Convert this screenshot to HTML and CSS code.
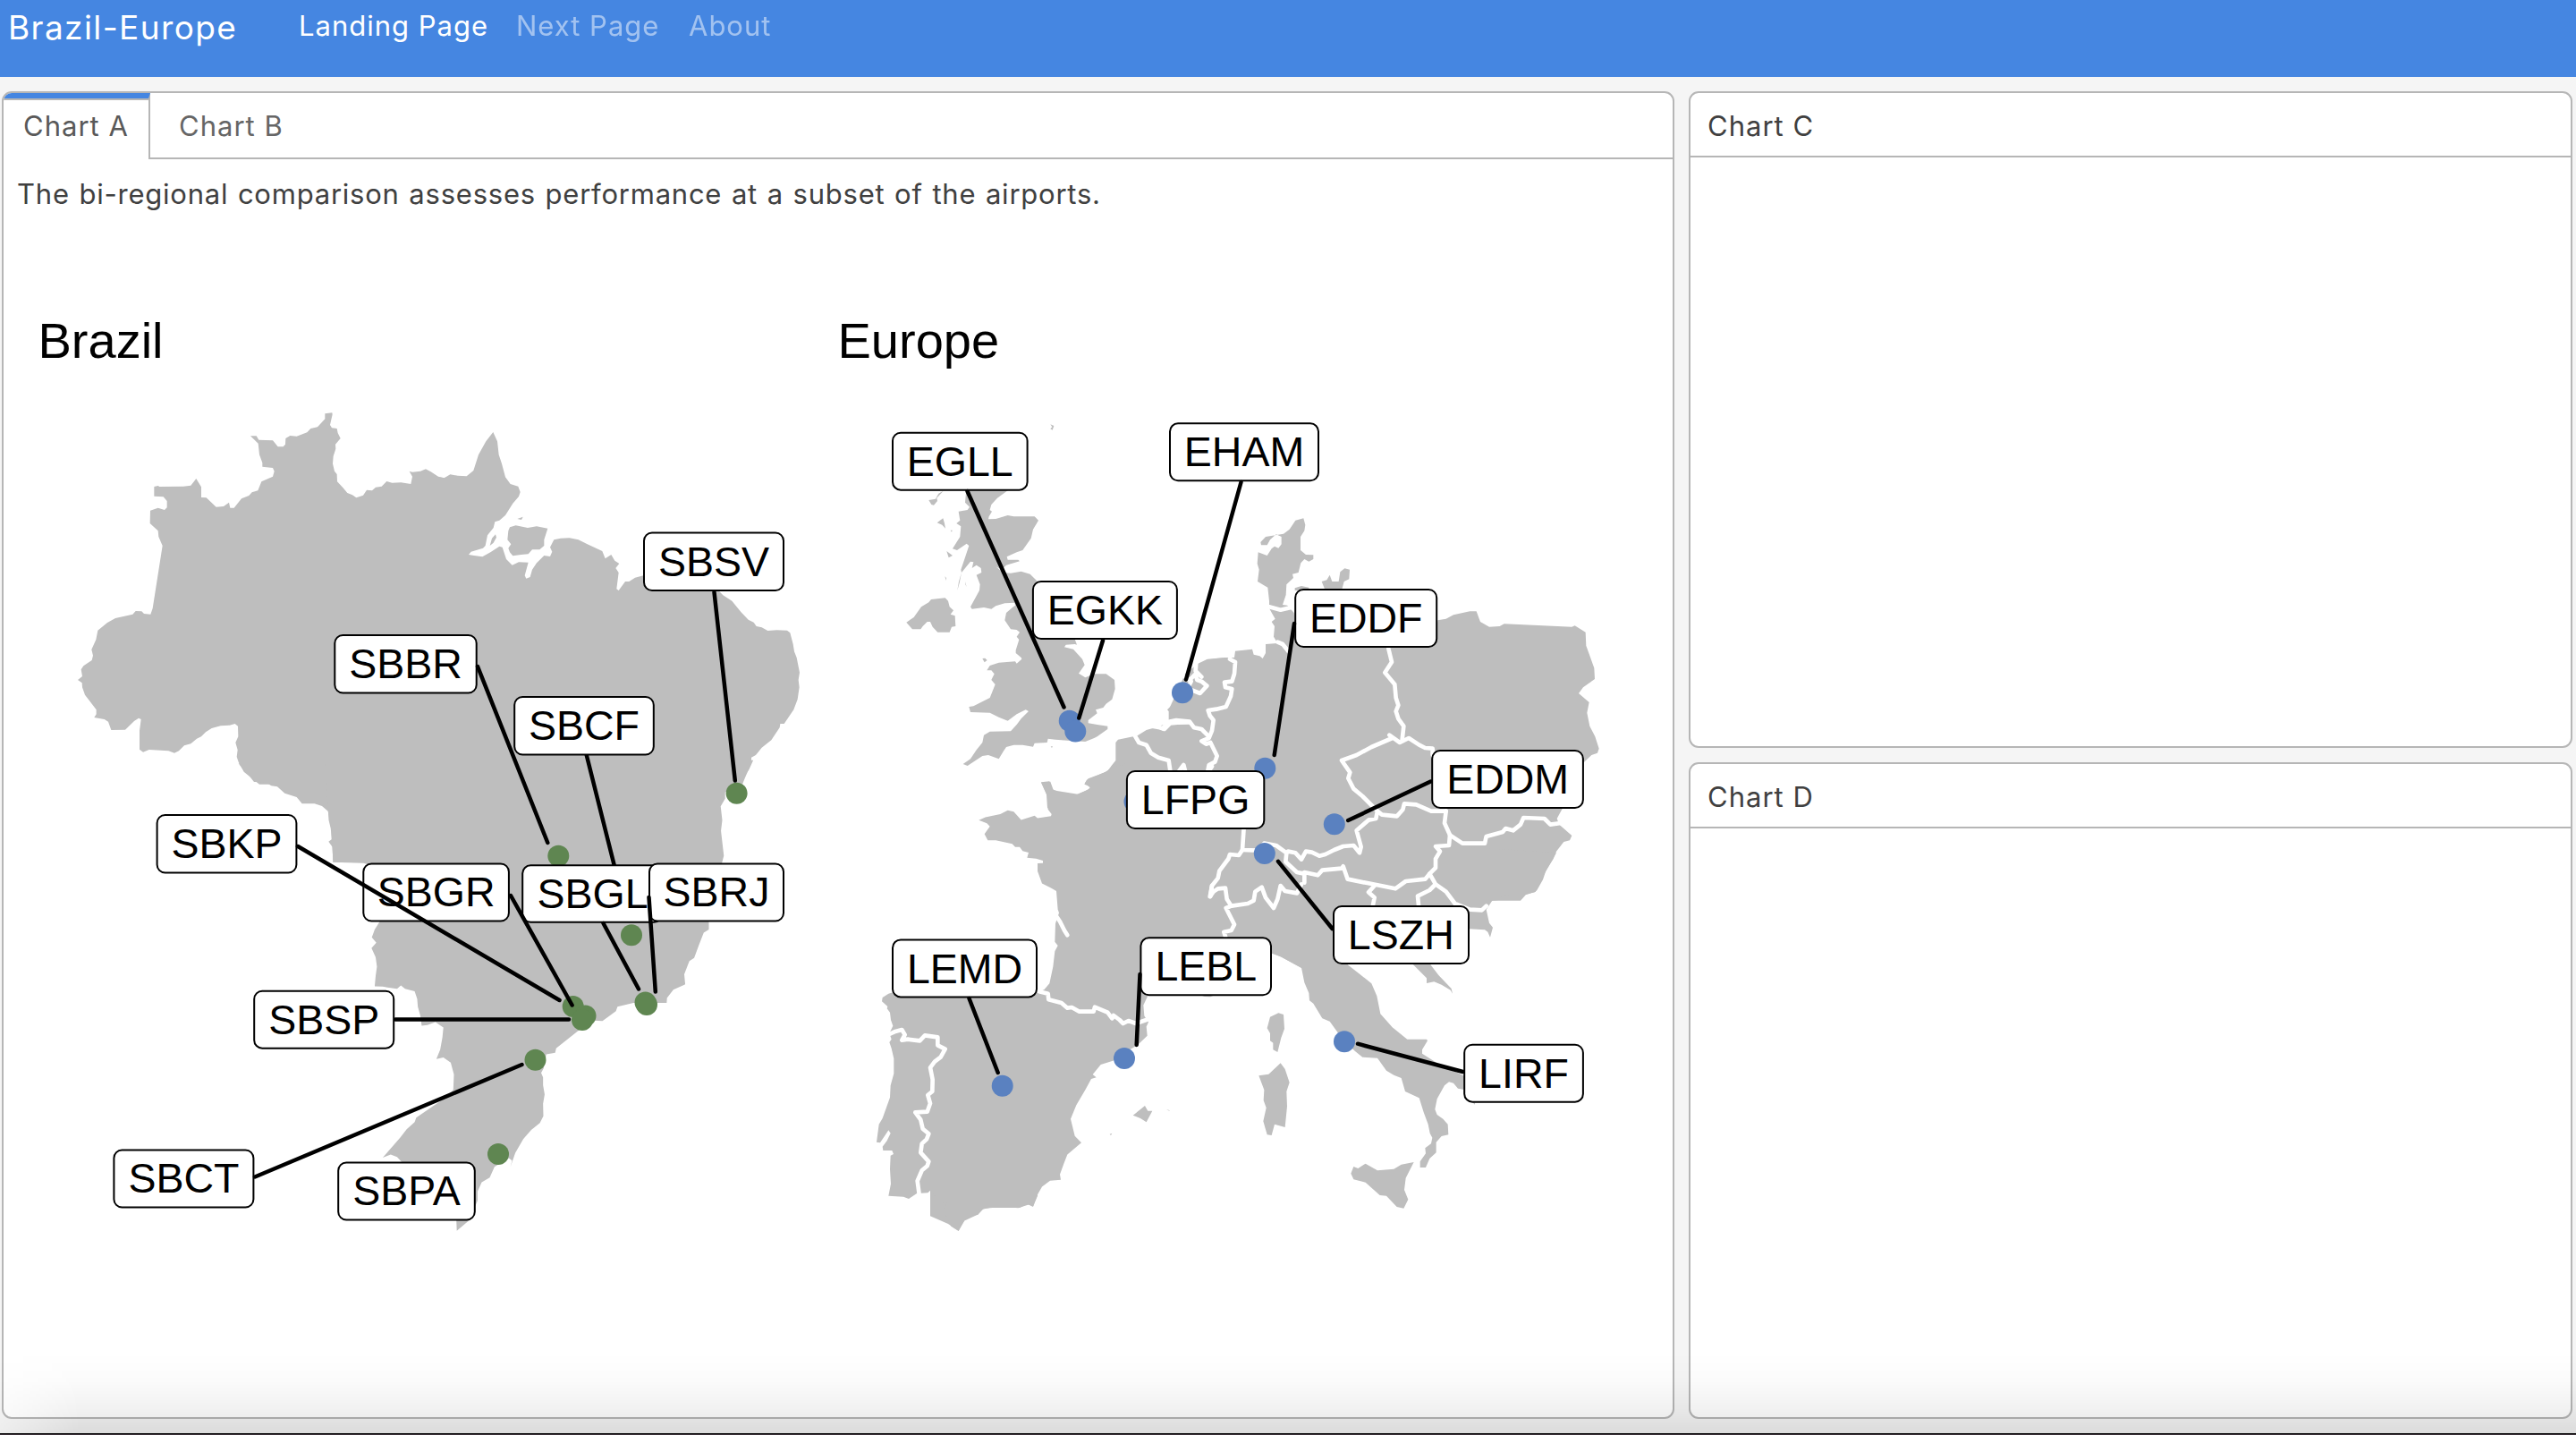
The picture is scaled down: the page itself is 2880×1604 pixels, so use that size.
FILE: index.html
```html
<!DOCTYPE html>
<html lang="en">
<head>
<meta charset="utf-8">
<title>Brazil-Europe</title>
<link rel="stylesheet" href="styles.css">
</head>
<body>
<header class="navbar">
  <a class="brand">Brazil-Europe</a>
  <nav class="nav">
    <a class="nav-link active">Landing Page</a>
    <a class="nav-link next">Next Page</a>
    <a class="nav-link about">About</a>
  </nav>
</header>
<main class="dashboard">
  <section class="card">
    <div class="tabs">
      <a class="tab active">Chart A</a>
      <a class="tab">Chart B</a>
      <span class="tab-fill"></span>
    </div>
    <p class="note">The bi-regional comparison assesses performance at a subset of the airports.</p>
    <svg class="map" viewBox="4 260 1864 1300">
      <text class="title" x="42.5" y="400">Brazil</text>
      <text class="title" x="936.5" y="400">Europe</text>

      <!-- Brazil -->
      <g class="land">
        <g transform="translate(60 430) scale(.33333)">
          <path d="M910,97 934,94 935,100 927,135 933,145 950,147 953,162 962,180 945,200 946,215 938,240 936,265 942,290 950,300 951,325 970,345 985,363 1002,370 1015,379 1038,371 1050,353 1068,355 1080,344 1100,341 1117,324 1135,329 1165,328 1198,333 1203,308 1193,290 1203,293 1230,290 1248,283 1265,292 1290,308 1310,313 1330,305 1330,1340 690,1340 665,1320 638,1298 620,1265 614,1248 617,1225 610,1200 619,1180 618,1145 608,1137 590,1142 560,1144 530,1152 510,1165 495,1180 480,1187 460,1204 438,1210 420,1228 405,1235 385,1228 320,1224 300,1232 288,1223 288,1160 293,1122 285,1118 270,1128 240,1157 193,1158 183,1130 170,1122 136,1116 143,1105 143,1090 120,1060 105,1040 96,1015 95,1000 81,990 96,978 92,955 100,943 128,924 132,908 127,888 142,855 148,824 180,798 207,783 265,770 275,759 295,760 303,768 325,770 332,750 365,540 352,510 350,490 323,465 324,422 350,413 372,420 380,412 380,390 368,376 337,374 337,342 350,339 355,342 435,341 460,338 478,315 495,343 495,378 512,379 545,410 570,408 588,395 592,413 605,413 630,382 655,372 665,361 685,355 697,325 735,308 740,290 735,279 700,275 700,262 690,235 686,197 660,172 680,172 688,185 735,187 752,208 770,208 777,200 778,180 793,171 815,173 850,160 862,147 885,142 910,115Z"/>
        </g>
        <g transform="translate(480 430) scale(.33333)">
          <path d="M-30,300 0,291 30,310 50,313 70,301 95,305 125,307 148,288 165,235 190,190 214,159 228,190 233,235 243,265 255,310 272,333 298,341 305,360 300,375 280,398 255,438 235,455 220,460 215,480 195,505 188,540 180,548 140,560 132,570 150,573 178,577 205,562 235,542 245,545 258,585 278,605 300,595 332,596 320,640 325,650 338,645 345,620 360,598 385,573 405,576 412,560 405,545 418,520 440,515 470,514 500,520 530,535 580,558 590,583 610,570 622,590 637,600 625,615 635,630 628,685 635,690 657,660 670,660 690,647 718,640 960,680 985,706 1015,725 1045,762 1070,788 1088,797 1097,810 1115,814 1135,825 1165,823 1200,824 1210,832 1220,870 1224,895 1232,915 1242,965 1238,990 1241,1015 1235,1055 1222,1090 1190,1137 1177,1137 1175,1150 1147,1192 1115,1217 1095,1242 1080,1250 1080,1270 1058,1320 1050,1340 -30,1340Z"/>
          <path d="M270,478 290,472 330,480 360,475 397,482 385,520 385,540 370,553 345,553 332,568 308,570 280,574 270,562 265,548 274,535 262,520 265,490Z"/>
          <path d="M222,502 210,515 203,540 215,530 225,512ZM295,450 314,443 309,453Z"/>
        </g>
        <path transform="translate(110 860) scale(.33333)" d="M470,-20 485,0 505,20 522,42 560,43 580,55 600,58 625,80 665,93 683,115 725,115 750,123 770,140 775,165 781,200 782,235 772,242 785,260 787,311 1320,315 1320,-20Z"/>
        <path transform="translate(360 860) scale(.35714 .34436)" d="M10,-30 21,165 27,190 31,225 32,250 35,301 130,304 180,320 180,495 165,520 156,545 170,563 155,580 168,610 172,640 168,670 165,704 190,705 205,708 235,712 247,701 260,712 290,720 298,745 300,770 308,800 312,832 330,830 355,820 380,838 377,870 370,910 358,940 380,935 403,952 413,990 411,1040 380,1070 345,1095 295,1130 290,1145 265,1168 245,1195 190,1260 215,1250 235,1258 250,1275 260,1300 420,1450 422,1498 460,1464 487,1400 487,1370 500,1340 525,1325 540,1290 585,1262 595,1270 590,1290 605,1245 630,1200 655,1170 682,1148 693,1125 692,1085 697,1055 692,1025 692,1000 686,985 694,970 702,925 730,920 733,905 800,850 850,815 878,817 920,785 925,770 975,758 1079,758 1080,742 1100,715 1137,698 1134,665 1150,622 1165,612 1180,570 1195,530 1211,520 1211,490 1253,300 1258,280 1249,200 1253,165 1248,120 1262,95 1262,75 1310,40 1337,0 1350,-30Z"/>
      </g>

      <!-- British Isles and the Channel coast -->
      <g class="land" transform="translate(960 460) scale(.33333)">
        <path d="M510,250 500,265 465,290 445,312 440,330 447,335 437,352 435,361 460,360 500,348 520,352 590,352 603,365 585,395 578,425 550,465 530,472 497,487 500,497 535,497 540,502 495,515 480,530 460,520 485,540 510,542 545,536 575,545 600,570 720,750 732,782 725,780 695,782 690,790 720,797 750,830 758,850 738,878 760,892 790,880 830,880 858,900 860,930 850,965 830,980 820,993 795,1000 800,1012 770,1035 770,1045 800,1050 835,1055 835,1065 800,1090 790,1095 760,1107 700,1103 660,1100 635,1097 632,1110 590,1112 585,1124 550,1118 520,1118 495,1125 485,1140 470,1165 435,1152 415,1155 365,1188 350,1182 375,1165 395,1135 415,1110 420,1085 440,1073 510,1072 530,1050 545,1030 570,1005 560,1000 530,1015 500,1037 470,1025 440,1010 375,1008 370,990 385,988 440,960 458,915 445,900 455,880 445,868 430,868 440,852 470,842 525,838 530,845 547,830 545,825 527,810 527,800 538,765 530,755 540,740 530,732 510,730 490,700 495,675 515,658 525,650 523,641 490,643 460,652 445,662 420,657 380,662 375,655 405,600 407,580 395,548 412,540 410,525 395,515 380,525 385,505 375,503 345,540 343,530 355,495 370,450 362,443 330,465 315,460 340,420 343,385 328,375 340,365 335,335 365,330 372,320 357,305 362,250Z"/>
        <path d="M160,707 185,690 210,655 235,640 243,630 270,627 290,625 300,635 305,655 318,667 308,680 323,685 325,720 312,722 305,740 265,740 248,722 240,705 230,705 215,720 208,730 180,730Z"/>
        <path d="M284,266 262,290 264,300 252,314 244,312 235,297 258,293 268,275ZM263,373 283,358 288,375 291,392 280,380ZM643,43 655,48 650,62 643,58 649,52ZM295,468 315,483 302,490ZM308,398 314,398 312,404ZM289,553 294,558 294,567ZM345,540 338,575 331,600 336,570ZM357,570 362,588 358,580ZM415,828 424,827 431,834 422,841ZM644,1123 651,1123 648,1128Z"/>
        <path d="M1400,845 1255,840 1235,825 1200,828 1165,833 1142,848 1100,880 1075,945 1050,985 1035,1000 1050,1015 1050,1040 1000,1058 965,1068 935,1087 870,1100 862,1110 862,1170 850,1185 835,1205 800,1220 765,1235 757,1250 778,1258 770,1268 735,1283 665,1272 645,1265 640,1240 612,1243 630,1285 633,1330 1400,1330Z"/>
      </g>
      <!-- France and eastern Spain -->
      <path class="land" transform="translate(1060 860) scale(.33333 .34436)" d="M600,-20 540,0 525,10 470,30 458,45 478,60 460,70 430,82 380,75 355,72 343,40 312,43 333,85 335,130 347,145 345,152 300,158 290,150 245,164 220,137 200,133 175,145 125,155 103,165 130,175 140,185 122,210 133,230 160,230 215,242 225,252 240,252 250,265 270,270 265,287 295,290 318,296 318,304 300,305 300,330 315,370 345,385 363,395 368,455 372,465 360,500 358,560 368,572 358,590 352,640 340,695 322,715 300,722 -60,722 -60,1450 0,1475 35,1498 55,1465 100,1445 120,1425 190,1420 235,1424 270,1413 285,1420 300,1380 315,1355 342,1335 378,1332 375,1315 388,1280 400,1250 447,1212 425,1190 411,1135 430,1090 460,1040 480,1005 497,1000 485,990 512,958 555,945 600,915 635,895 668,865 665,835 672,820 658,800 655,765 670,735 700,710 1080,595 1115,608 1185,645 1215,645 1215,-20Z"/>
      <!-- Iberia -->
      <g class="land" transform="translate(960 1040) scale(.33333)">
        <path d="M78,238 80,225 100,212 115,208 600,208 600,890 585,925 565,918 540,930 490,930 440,930 415,935 400,953 380,957 355,970 335,1008 310,992 295,965 292,945 283,940 295,915 275,910 250,885 240,872 232,880 195,882 168,900 150,893 100,890 108,850 105,800 107,755 117,750 112,738 82,738 80,725 95,705 107,680 100,670 80,700 72,712 60,710 68,650 80,630 105,560 107,520 118,480 118,430 110,395 103,375 110,365 103,345 115,320 108,300 105,275 95,262 97,255Z"/>
        <path d="M920,620 960,588 970,605 985,605 965,643 945,630ZM842,683 850,680 846,687ZM1032,600 1045,607 1040,602Z"/>
      </g>
      <!-- Germany, Denmark, Poland and Central Europe -->
      <g class="land" transform="translate(1300 540) scale(.33333)">
        <path d="M20,760 75,640 118,605 150,590 210,585 240,585 243,563 300,557 305,575 325,580 335,588 345,570 345,540 385,537 372,515 375,480 365,465 377,455 357,420 357,395 352,350 318,330 323,290 317,270 320,232 350,243 365,220 375,212 388,218 398,205 398,180 380,172 360,190 350,208 330,208 328,198 345,180 405,170 425,155 445,125 472,118 478,140 475,160 462,180 462,225 480,240 505,241 505,255 490,263 475,255 463,268 455,300 435,305 438,318 415,340 413,375 402,408 418,410 440,435 450,540 915,540 922,460 950,455 975,442 1030,430 1052,430 1065,465 1095,482 1130,480 1145,472 1372,482 1382,478 1418,500 1420,545 1447,620 1449,657 1410,685 1395,705 1430,735 1423,770 1432,815 1450,850 1463,890 1458,905 1438,912 1412,937 1400,1080 1340,1092 1322,1125 1330,1145 1372,1182 1365,1198 1345,1203 1320,1235 1310,1260 1285,1300 1275,1330 1255,1365 1248,1372 1220,1378 1200,1400 20,1400Z"/>
        <path d="M533,330 550,325 560,308 568,330 590,330 595,298 610,286 627,290 625,322 608,330 600,360 545,360ZM443,352 465,345 490,350 490,360 443,360Z"/>
      </g>
      <!-- Italy and the Balkans -->
      <g class="land" transform="translate(1340 880) scale(.33333)">
        <path d="M0,200 0,540 245,555 280,570 345,605 355,655 370,690 372,715 385,725 415,775 440,785 465,820 500,860 525,885 550,905 600,908 630,950 655,965 680,975 693,1020 740,1042 755,1090 770,1130 776,1160 784,1175 780,1195 760,1210 762,1228 743,1255 743,1275 762,1275 775,1245 797,1225 797,1190 815,1170 838,1165 836,1130 820,1112 800,1098 793,1080 800,1045 825,1000 840,988 855,992 870,1010 895,1015 895,970 800,925 750,893 750,880 768,850 765,845 700,845 650,805 610,760 598,700 580,658 545,630 500,595 600,560 720,595 765,640 765,657 790,652 815,662 845,680 852,692 848,675 805,630 778,595 800,500 908,475 960,478 970,485 978,503 987,470 975,455 965,410 985,380 1005,378 1025,362 1100,360 1130,350 1160,290 1200,220 900,200Z"/>
        <path d="M232,800 240,770 268,757 285,762 288,810 277,840 265,888 250,880 250,857 240,850 240,825 230,808ZM202,967 235,962 275,925 290,945 305,990 295,1020 297,1070 290,1140 255,1130 245,1167 230,1165 217,1120 227,1075 218,1050 220,1015ZM511,1295 520,1272 535,1278 560,1262 600,1285 655,1280 680,1265 722,1257 695,1310 690,1350 703,1382 688,1412 665,1407 630,1370 608,1368 560,1325 520,1315ZM10,698 50,698 40,703 20,702ZM920,1055 928,1058 925,1064Z"/>
      </g>

      <!-- Borders and inlets -->
      <g class="border" transform="translate(960 460) scale(.33333)">
        <path d="M925,1085 940,1110 965,1118 980,1145 1005,1160 1040,1170 1045,1205M1075,1205 1090,1185 1095,1205M1175,1205 1185,1190M985,1055 1010,1060 1025,1065 1045,1045 1070,1043 1110,1042"/>
        <path d="M1115,895 1130,880 1135,900 1150,905 1168,920 1145,945 1120,935"/>
      </g>
      <g class="border" transform="translate(1300 540) scale(.33333)">
        <path d="M112,600 110,630 130,650M75,650 95,665 85,685"/>
        <path d="M225,590 243,600 240,640 232,665 207,668 210,685 232,690 228,715 212,750 180,758 152,762 158,780 170,795 165,830 155,855 130,865 145,875 160,870 182,915 175,935 155,945 150,970"/>
        <path d="M0,822 20,800 45,795 90,800 105,820 130,825 155,850"/>
        <path d="M357,415 395,425 440,415M385,533 402,540 422,565"/>
        <path d="M757,555 768,600 745,635 778,675 782,720 790,745 782,765 790,790 808,815 803,860"/>
        <path d="M905,912 905,890 880,888 860,878 825,855 795,870 760,845 770,855 700,885 650,912 600,930 628,970 622,990 640,1025 670,1050 700,1080 720,1100 735,1112 785,1117 805,1095 810,1075 850,1078 900,1100 950,1100"/>
        <path d="M720,1100 715,1125 690,1130 650,1165 665,1220 660,1240 640,1215 605,1218 575,1230 545,1245 525,1250 500,1238 480,1235 465,1262 445,1240 420,1235 415,1240 380,1215 340,1208 320,1232 267,1230 272,1155"/>
        <path d="M950,1100 945,1140 963,1180 960,1215 915,1218 930,1235 915,1260 915,1290 895,1310"/>
        <path d="M963,1180 1005,1208 1080,1208 1085,1185 1140,1170 1150,1158 1175,1165 1200,1145 1210,1122 1280,1125 1300,1145 1335,1140"/>
        <path d="M415,1240 412,1270 450,1305 475,1310 475,1340M475,1305 520,1315 535,1298 600,1292 605,1285 620,1328 690,1342 780,1360 815,1335 880,1328 895,1310"/>
        <path d="M267,1230 255,1248 225,1245 220,1260 190,1300 185,1325 165,1350 160,1385"/>
      </g>
      <g class="border" transform="translate(1340 880) scale(.33333)">
        <path d="M45,330 38,367 50,350 65,340 90,338 95,375 110,398 165,390 185,380 190,350 212,335 225,370 252,405 265,375 275,330 290,348 330,355 345,325"/>
        <path d="M110,398 92,405 120,460 110,480 85,485 90,500M590,330 570,352 590,370 585,395M790,330 775,345 735,365 738,395M775,290 795,325 830,350 860,390 910,410 950,412 965,398"/>
      </g>
      <g class="border" transform="translate(960 1040) scale(.33333)">
        <path d="M103,348 120,340 145,333 155,350 145,368 165,365 205,370 222,352 265,358 265,385 290,398 275,425 255,440 240,460 248,500 247,540 232,552 240,580 230,608 190,610 208,635 215,665 235,682 228,700 212,715 208,745 235,775 230,790 212,805 197,840 203,885"/>
        <path d="M605,205 635,212 637,232 680,243 700,260 715,258 740,272 788,272 792,257 835,275 850,295 855,285 875,300 887,312 905,303 930,312 965,300"/>
        <path d="M665,-45 675,-30 690,0 700,16"/>
      </g>

      <path class="leader" d="M655.5,843 702,1028"/>
      <g class="dot brazil">
        <circle cx="823.6" cy="886.8" r="12"/><circle cx="624.3" cy="956.8" r="12"/><circle cx="706" cy="1045.3" r="12"/>
        <circle cx="721.5" cy="1120.5" r="12"/><circle cx="723" cy="1123" r="12"/><circle cx="640.7" cy="1125" r="12"/>
        <circle cx="654.5" cy="1135.5" r="12"/><circle cx="651" cy="1140" r="12"/><circle cx="598.5" cy="1184.7" r="12"/><circle cx="557" cy="1290" r="12"/>
      </g>
      <g class="dot europe">
        <circle cx="1195.7" cy="805.7" r="12"/><circle cx="1202.3" cy="817.5" r="12"/><circle cx="1322" cy="774.3" r="12"/>
        <circle cx="1414.3" cy="858.8" r="12"/><circle cx="1491.8" cy="921.3" r="12"/><circle cx="1413.8" cy="954" r="12"/>
        <circle cx="1503" cy="1164.3" r="12"/><circle cx="1257" cy="1183" r="12"/><circle cx="1120.7" cy="1213.7" r="12"/><circle cx="1268.5" cy="896" r="12"/>
      </g>

      <g class="label">
        <rect x="720" y="595.5" width="156" height="64.5" rx="9"/><text x="798" y="643.5">SBSV</text>
        <rect x="374.3" y="710" width="158.4" height="64.5" rx="9"/><text x="453.5" y="758">SBBR</text>
        <rect x="575.2" y="779" width="155.6" height="64.5" rx="9"/><text x="653" y="827">SBCF</text>
        <rect x="175.6" y="911" width="155.8" height="64.5" rx="9"/><text x="253.5" y="959">SBKP</text>
        <rect x="406.3" y="965.5" width="162.6" height="64" rx="9"/><text x="487.6" y="1013.3">SBGR</text>
        <rect x="584.2" y="967.3" width="156" height="63.5" rx="9"/><text x="662.5" y="1015">SBGL</text>
        <rect x="726" y="965.5" width="150" height="64" rx="9"/><text x="801" y="1013.3">SBRJ</text>
        <rect x="284.2" y="1107.7" width="156" height="64" rx="9"/><text x="362.2" y="1155.6">SBSP</text>
        <rect x="127.4" y="1285.5" width="156" height="64" rx="9"/><text x="205.4" y="1333.3">SBCT</text>
        <rect x="378.2" y="1299.5" width="152.6" height="64" rx="9"/><text x="454.5" y="1347.3">SBPA</text>
        <rect x="998" y="483.7" width="150.6" height="64" rx="9"/><text x="1073.3" y="531.6">EGLL</text>
        <rect x="1154.9" y="650" width="161" height="64" rx="9"/><text x="1235.4" y="698">EGKK</text>
        <rect x="1308" y="473.3" width="166" height="64" rx="9"/><text x="1391" y="521.3">EHAM</text>
        <rect x="1448.2" y="659" width="158" height="64" rx="9"/><text x="1527.2" y="707.3">EDDF</text>
        <rect x="1601.2" y="839" width="168.7" height="64" rx="9"/><text x="1685.6" y="887">EDDM</text>
        <rect x="1259.9" y="862" width="153.4" height="64" rx="9"/><text x="1336.6" y="910">LFPG</text>
        <rect x="1491" y="1013" width="151" height="64" rx="9"/><text x="1566.3" y="1061">LSZH</text>
        <rect x="998" y="1050.4" width="161" height="64" rx="9"/><text x="1078.5" y="1098.6">LEMD</text>
        <rect x="1275.4" y="1048.3" width="145.6" height="64" rx="9"/><text x="1348.3" y="1096.3">LEBL</text>
        <rect x="1637.2" y="1167.7" width="132.7" height="64" rx="9"/><text x="1703.5" y="1216">LIRF</text>
      </g>
      <path class="leader" d="M798.5,662 821.8,872.5M534,745 612.3,942M333,946 625.5,1118M571,1001 639.6,1123.5M674.5,1032 714,1105.5M725.5,1003 732.8,1108.5M442,1139.5H636M285,1315.5 583.5,1190M1081.5,549 1189.5,790.5M1233,716 1206.3,802.5M1387.5,539 1326,759.5M1447,697 1424.7,844M1599.5,873.5 1507.2,917M1489.5,1038 1429,962.8M1635.5,1198 1518,1166.7M1083.5,1116 1115.7,1199M1274.5,1089 1270.7,1168"/>
    </svg>
  </section>
  <div class="column">
    <section class="card"><h2 class="card-title">Chart C</h2></section>
    <section class="card"><h2 class="card-title">Chart D</h2></section>
  </div>
</main>
<div class="bottom-shade"></div>
<footer class="bottom-edge"></footer>
</body>
</html>
```
FILE: styles.css
```css
* { box-sizing: border-box; }
body {
  margin: 0;
  height: 1604px;
  display: flex;
  flex-direction: column;
  overflow: hidden;
  position: relative;
  background: #f5f5f5;
  color: #404040;
  font: 31px/40px Inter, "Liberation Sans", sans-serif;
  letter-spacing: 1px;
}
.navbar {
  height: 86px;
  flex: none;
  display: flex;
  align-items: flex-start;
  padding-left: 9px;
  background: #4586e1;
  color: #fff;
  white-space: nowrap;
}
.brand { width: 325px; padding-top: 10.5px; font-size: 37px; letter-spacing: 1.4px; }
.nav { display: flex; padding-top: 9px; }
.nav-link { opacity: .5; }
.nav-link.active { opacity: 1; width: 243px; }
.nav-link.next { width: 193px; }
.dashboard {
  flex: 1;
  display: grid;
  grid-template-columns: 1870px 1fr;
  column-gap: 16px;
  padding: 16px 4px 16px 2px;
  min-height: 0;
}
.column { display: grid; grid-template-rows: 1fr 1fr; gap: 16px; min-height: 0; }
.card {
  background: #fff;
  border: 2px solid #b6b6b6;
  border-radius: 11px;
  overflow: hidden;
  min-height: 0;
}
.card-title {
  margin: 0;
  height: 72px;
  padding: 17px 0 0 19px;
  border-bottom: 2px solid #b6b6b6;
  font-size: 31px;
  font-weight: 400;
}
.tabs { display: flex; height: 74px; color: #666; }
.tab { padding: 17px 0 0 32px; width: 180px; border-bottom: 2px solid #b6b6b6; }
.tab.active {
  width: 164px;
  padding: 11px 0 0 22px;
  border-top: 6px solid #4586e1;
  border-bottom: 0;
  border-right: 2px solid #b6b6b6;
  box-shadow: inset 0 2px #b6b6b6;
  color: #595959;
}
.tab-fill { flex: 1; border-bottom: 2px solid #b6b6b6; }
.note { margin: 0; padding: 19px 0 0 15px; white-space: nowrap; letter-spacing: .77px; word-spacing: 1.2px; }
.map { display: block; width: 1864px; height: 1300px; margin-top: 23px; font-family: "Liberation Sans", Arial, sans-serif; letter-spacing: 0; }
.title { font-size: 56px; fill: #000; }
.land { fill: #bebebe; }
.border { fill: none; stroke: #fff; stroke-width: 14; stroke-linejoin: round; stroke-linecap: round; }
.dot.brazil { fill: #5f8651; }
.dot.europe { fill: #5a81c0; }
.label rect { fill: #fff; stroke: #000; stroke-width: 2; }
.label text { font-size: 46.5px; text-anchor: middle; fill: #000; }
.leader { fill: none; stroke: #000; stroke-width: 4.5; stroke-linecap: round; }
.bottom-shade {
  position: absolute;
  inset: auto 0 2px 0;
  height: 90px;
  background: linear-gradient(rgba(0,0,0,0), rgba(0,0,0,.015) 35%, rgba(0,0,0,.06) 75%, rgba(0,0,0,.1));
  mask-image: linear-gradient(to right, rgba(0,0,0,.3), #000 90px);
}
.bottom-edge { flex: none; height: 2px; background: #3a3038; border-top: 1px solid #000; }
```
